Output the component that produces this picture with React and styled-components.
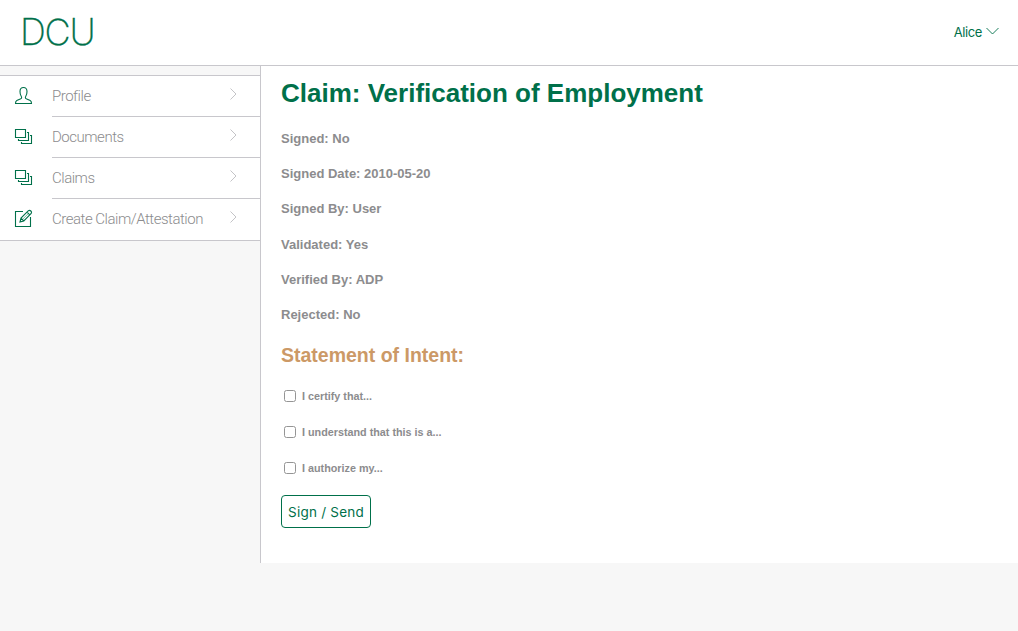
import React from "react";
import styled, { createGlobalStyle } from "styled-components";

const green = "#00704a";
const line = "#c8c7cc";

const GlobalStyle = createGlobalStyle`
  * { box-sizing: border-box; }
  body {
    margin: 0;
    background: #f7f7f7;
    font-family: "Liberation Sans", Arial, sans-serif;
    font-size: 13px;
    color: #8c8c8e;
  }
`;

const Header = styled.header`
  height: 66px;
  display: flex;
  justify-content: space-between;
  background: #fff;
  border-bottom: 1px solid ${line};
  padding: 0 19px 0 20px;
`;

const Logo = styled.div`
  font-family: Inter, sans-serif;
  font-weight: 200;
  font-size: 36px;
  line-height: 64px;
  letter-spacing: -1.2px;
  color: ${green};
  -webkit-text-stroke: 0.3px ${green};
`;

const UserMenu = styled.div`
  display: flex;
  gap: 4px;
  font-family: Inter, sans-serif;
  font-size: 13px;
  line-height: 65px;
  letter-spacing: -0.4px;
  color: ${green};

  svg { margin-top: 27px; }
`;

const Layout = styled.div`
  display: flex;
  align-items: flex-start;
`;

const Sidebar = styled.nav`
  width: 260px;
  margin-top: 9px;
  background: #fff;
  border-top: 1px solid ${line};
  border-bottom: 1px solid ${line};
`;

const MenuItem = styled.div`
  display: flex;
  height: 41px;
  padding-left: 14px;

  > svg { flex: none; margin: 10px 19px 0 0; }
`;

const MenuBody = styled.div`
  flex: 1;
  display: flex;
  justify-content: space-between;
  border-bottom: ${(p) => (p.$last ? "0" : `1px solid ${line}`)};
  padding-right: 22px;

  svg { margin-top: 12px; }
`;

const MenuText = styled.span`
  font-family: Roboto, sans-serif;
  font-weight: 300;
  font-size: 15px;
  line-height: 41px;
  letter-spacing: -0.48px;
  white-space: nowrap;
`;

const Main = styled.main`
  flex: 1;
  height: 497px;
  background: #fff;
  border-left: 1px solid ${line};
  padding: 12px 20px 0;
`;

const Title = styled.h1`
  margin: 0 0 17px;
  font-size: 26px;
  line-height: 30px;
  color: ${green};
`;

const Fact = styled.h4`
  margin: 0 0 17.2px;
  height: 18px;
  font-size: 13px;
  line-height: 28px;
`;

const Subtitle = styled.h2`
  margin: 24px 0 0;
  font-size: 19.5px;
  line-height: 24px;
  color: #cc9966;
`;

const Checks = styled.div`
  padding-top: 11px;
`;

const Check = styled.label`
  display: flex;
  align-items: center;
  height: 36px;
  font-size: 10.79px;
  font-weight: bold;
`;

const Box = styled.input`
  appearance: none;
  width: 12px;
  height: 12px;
  margin: 0 6px 0 3px;
  border: 1px solid #959595;
  border-radius: 2.5px;
  background: #fff;
`;

const Button = styled.button`
  display: block;
  width: 90px;
  height: 33px;
  margin-top: 9px;
  padding: 1px 0 0;
  border: 1px solid ${green};
  border-radius: 4px;
  background: #fff;
  color: ${green};
  font-family: Inter, sans-serif;
  font-size: 13.5px;
  letter-spacing: 0.22px;
  white-space: nowrap;
`;

const ProfileIcon = () => (
  <svg width="19" height="20" viewBox="0 0 19 20" fill="none" stroke={green} strokeWidth="1.1">
    <path d="M1.5 17.5h16c0-3-1.5-3.4-5.2-4.7-1-.4-1.2-1.5-.5-2.5.8-1.1 1.2-2.5 1.2-4.8 0-2.6-1.3-4-3.5-4s-3.5 1.4-3.5 4c0 2.3.4 3.7 1.2 4.8.7 1 .5 2.1-.5 2.5C3 14.1 1.5 14.5 1.5 17.5z" />
  </svg>
);

const StackIcon = () => (
  <svg width="19" height="20" viewBox="0 0 19 20" fill="none" stroke={green} strokeWidth="1.1">
    <path d="M1.5 2.5h10v8h-10zM13 5.5h1.5v8h-10V12M16 8.5h1.5v8H7.5V15" />
  </svg>
);

const EditIcon = () => (
  <svg width="19" height="20" viewBox="0 0 19 20" fill="none" stroke={green} strokeWidth="1.1">
    <path d="M9 2.5H1.5v15h15V8" />
    <path d="M6 13l1-3.9 7.4-7.4c1.7-1.2 4 1.1 2.8 2.8L9.8 11.9zM7 9.1l2.8 2.8M13 3.1l2.8 2.8" />
    <path d="M8.5 10.4l5.8-5.8" strokeWidth="0.5" />
  </svg>
);

const Chevron = () => (
  <svg width="9" height="12" viewBox="0 0 9 12" fill="none" stroke="#c4c4c7" strokeWidth="1">
    <path d="M1.5 0.5L7 6l-5.5 5.5" />
  </svg>
);

const menu = [
  { label: "Profile", Icon: ProfileIcon },
  { label: "Documents", Icon: StackIcon },
  { label: "Claims", Icon: StackIcon },
  { label: "Create Claim/Attestation", Icon: EditIcon },
];

const facts = [
  "Signed: No",
  "Signed Date: 2010-05-20",
  "Signed By: User",
  "Validated: Yes",
  "Verified By: ADP",
  "Rejected: No",
];

const statements = ["I certify that...", "I understand that this is a...", "I authorize my..."];

export default function App() {
  return (
    <>
      <GlobalStyle />
      <Header>
        <Logo>DCU</Logo>
        <UserMenu>
          Alice
          <svg width="13" height="8" viewBox="0 0 13 8" fill="none" stroke={green} strokeWidth="0.9">
            <path d="M0.5 1l6 6 6-6" />
          </svg>
        </UserMenu>
      </Header>
      <Layout>
        <Sidebar>
          {menu.map(({ label, Icon }, i) => (
            <MenuItem key={label}>
              <Icon />
              <MenuBody $last={i === menu.length - 1}>
                <MenuText>{label}</MenuText>
                <Chevron />
              </MenuBody>
            </MenuItem>
          ))}
        </Sidebar>
        <Main>
          <Title>Claim: Verification of Employment</Title>
          {facts.map((f) => (
            <Fact key={f}>{f}</Fact>
          ))}
          <Subtitle>Statement of Intent:</Subtitle>
          <Checks>
            {statements.map((s) => (
              <Check key={s}>
                <Box type="checkbox" />
                {s}
              </Check>
            ))}
          </Checks>
          <Button>Sign / Send</Button>
        </Main>
      </Layout>
    </>
  );
}
